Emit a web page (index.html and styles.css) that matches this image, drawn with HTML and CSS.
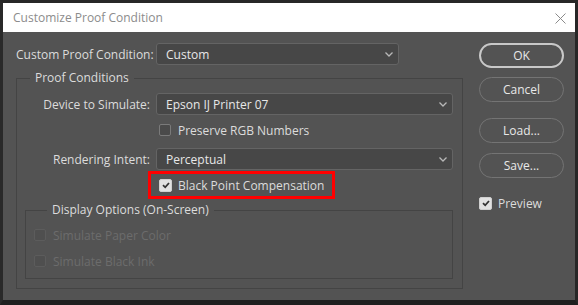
FILE: index.html
```html
<!DOCTYPE html>
<html>
<head>
<meta charset="utf-8">
<link rel="stylesheet" href="styles.css">
</head>
<body>
<div class="window">
  <div class="titlebar">
    <span class="title">Customize Proof Condition</span>
    <svg class="close" width="11" height="11" viewBox="0 0 11 11"><path d="M0.5 0.5 L10.5 10.5 M10.5 0.5 L0.5 10.5" stroke="#8a8a8a" stroke-width="1" fill="none"/></svg>
  </div>
  <div class="content">
    <div class="main">
      <div class="row">
        <span class="lbl lbl-left">Custom Proof Condition:</span>
        <div class="select select-short"><span>Custom</span><svg class="chev" width="8" height="5" viewBox="0 0 8 5"><path d="M0.5 0.5 L4 4 L7.5 0.5" stroke="#b8b8b8" stroke-width="1.3" fill="none"/></svg></div>
      </div>
      <fieldset class="group outer">
        <legend>Proof Conditions</legend>
        <div class="row">
          <span class="lbl">Device to Simulate:</span>
          <div class="select select-long"><span>Epson IJ Printer 07</span><svg class="chev" width="8" height="5" viewBox="0 0 8 5"><path d="M0.5 0.5 L4 4 L7.5 0.5" stroke="#b8b8b8" stroke-width="1.3" fill="none"/></svg></div>
        </div>
        <div class="check-row indent gap-preserve">
          <span class="cb"></span><span>Preserve RGB Numbers</span>
        </div>
        <div class="row gap-render">
          <span class="lbl">Rendering Intent:</span>
          <div class="select select-long"><span>Perceptual</span><svg class="chev" width="8" height="5" viewBox="0 0 8 5"><path d="M0.5 0.5 L4 4 L7.5 0.5" stroke="#b8b8b8" stroke-width="1.3" fill="none"/></svg></div>
        </div>
        <div class="highlight">
          <span class="cb checked"><svg width="10" height="10" viewBox="0 0 10 10"><path d="M2 5.2 L4.2 7.3 L8 3" stroke="#333" stroke-width="1.8" fill="none"/></svg></span><span>Black Point Compensation</span>
        </div>
        <fieldset class="group inner">
          <legend>Display Options (On-Screen)</legend>
          <div class="check-row disabled">
            <span class="cb"></span><span>Simulate Paper Color</span>
          </div>
          <div class="check-row disabled gap-ink">
            <span class="cb"></span><span>Simulate Black Ink</span>
          </div>
        </fieldset>
      </fieldset>
    </div>
    <div class="side">
      <button class="btn btn-default">OK</button>
      <button class="btn btn-cancel">Cancel</button>
      <button class="btn btn-load">Load...</button>
      <button class="btn btn-save">Save...</button>
      <div class="check-row preview">
        <span class="cb checked"><svg width="10" height="10" viewBox="0 0 10 10"><path d="M2 5.2 L4.2 7.3 L8 3" stroke="#333" stroke-width="1.8" fill="none"/></svg></span><span>Preview</span>
      </div>
    </div>
  </div>
</div>
</body>
</html>
```
FILE: styles.css
```css
html, body {
  margin: 0;
  padding: 0;
  background: #262626;
}
body {
  font-family: "Open Sans", "Noto Sans", sans-serif;
  font-size: 12px;
  color: #dcdcdc;
}
.window {
  width: 578px;
  height: 305px;
  box-sizing: border-box;
  border-style: solid;
  border-color: #272727 #272727 #1f1f1f #292929;
  border-width: 3px 3px 5px 3px;
  background: #535353;
  display: flex;
  flex-direction: column;
}
.titlebar {
  height: 29px;
  background: #ffffff;
  display: flex;
  align-items: center;
  justify-content: space-between;
  padding: 0 9px 0 10px;
  flex: none;
}
.title {
  color: #8c8c8c;
  font-size: 12px;
  line-height: 16px;
}
.close {
  display: block;
  margin-top: 1px;
}
.content {
  flex: 1;
  display: flex;
  padding: 11px 0 0 13px;
}
.main {
  width: 447px;
  flex: none;
}
.row {
  display: flex;
  align-items: center;
  height: 22px;
}
.lbl {
  width: 133px;
  text-align: right;
  margin-right: 6px;
  white-space: nowrap;
}
.lbl-left {
  width: 134px;
  text-align: left;
}
.select {
  height: 22px;
  box-sizing: border-box;
  border: 1px solid #646464;
  border-radius: 3px;
  background: #474747;
  display: flex;
  align-items: center;
  justify-content: space-between;
  padding: 0 5px 0 9px;
  color: #e8e8e8;
}
.select-short { width: 243px; }
.select-long { width: 297px; }
.chev { display: block; margin-top: 1px; }

.group {
  margin: 0;
  padding: 0;
  border: 1px solid #444444;
  min-width: 0;
}
.group legend {
  margin-left: 13px;
  padding: 0 5px;
  line-height: 16px;
}
.outer {
  margin-top: 5px;
  padding: 7px 9px 9px 0;
}
.inner {
  margin: 3px 0 0 8px;
  padding: 9px 0 9px 8px;
}

.check-row {
  display: flex;
  align-items: center;
  height: 16px;
  white-space: nowrap;
}
.indent { margin-left: 142px; }
.gap-preserve { margin-top: 7px; }
.gap-render { margin-top: 10px; }
.gap-ink { margin-top: 10px; }

.cb {
  width: 12px;
  height: 12px;
  box-sizing: border-box;
  border: 1px solid #7a7a7a;
  border-radius: 2px;
  background: #4a4a4a;
  margin-right: 7px;
  flex: none;
  display: flex;
  align-items: center;
  justify-content: center;
}
.cb.checked {
  width: 13px;
  height: 13px;
  background: #e2e2e2;
  border-color: #cfcfcf;
  margin-right: 6px;
}
.cb svg { display: block; }

.highlight {
  margin-left: 131px;
  width: 187px;
  height: 28px;
  box-sizing: border-box;
  border: 3px solid #ff0000;
  display: flex;
  align-items: center;
  padding-left: 8px;
  white-space: nowrap;
  margin-top: 1px;
}

.disabled { color: #6c6c6c; }
.disabled .cb {
  border-color: #5c5c5c;
  background: #4f4f4f;
}

.side {
  width: 85px;
  margin-left: 16px;
  display: flex;
  flex-direction: column;
}
.btn {
  height: 25px;
  box-sizing: border-box;
  border: 1px solid #747474;
  border-radius: 13px;
  background: transparent;
  color: #e8e8e8;
  font-family: "Open Sans", "Noto Sans", sans-serif;
  font-size: 12px;
  padding: 0;
}
.btn-default { border: 2px solid #c8c8c8; }
.btn-cancel { margin-top: 9px; }
.btn-load { margin-top: 16px; }
.btn-save { margin-top: 10px; }
.preview { margin-top: 17px; }
```
